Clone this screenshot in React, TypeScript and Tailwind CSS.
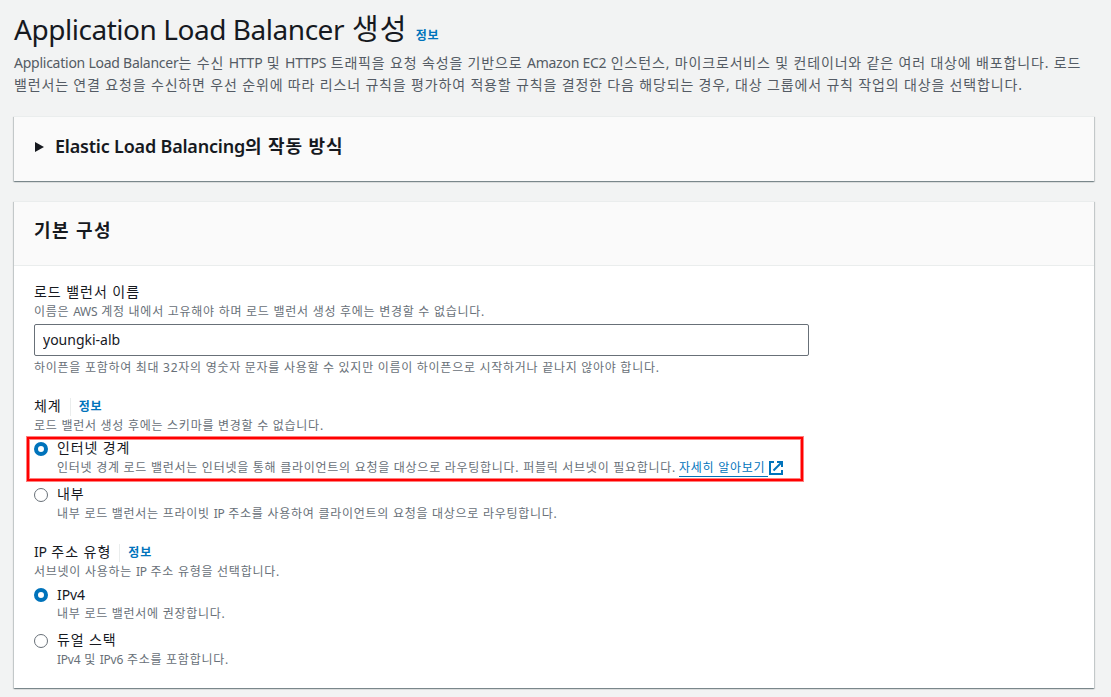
import { useState, type ReactNode } from "react";

function En({ children }: { children: ReactNode }) {
  return <span className="tracking-[-0.25px]">{children}</span>;
}

function InfoLink() {
  return (
    <a href="#" className="text-xs font-bold leading-[22px] tracking-[0.9px] text-[#0073bb]">
      정보
    </a>
  );
}

function ExternalIcon() {
  return (
    <svg viewBox="0 0 14 14" className="h-3.5 w-3.5 shrink-0" fill="none" stroke="#0073bb" strokeWidth="2">
      <path d="M5 1H1v12h12V9" />
      <path d="M8 1h5v5" />
      <path d="M13 1 4.5 9.5" />
    </svg>
  );
}

function Field({ label, info, hint, children }: { label: ReactNode; info?: boolean; hint: ReactNode; children: ReactNode }) {
  return (
    <div>
      <div className="flex h-[22px] items-center">
        <span className="pb-0.5 text-sm leading-5 tracking-[0.95px]">{label}</span>
        {info && (
          <span className="ml-2 flex h-[18px] items-center border-l border-[#eaeded] pl-2">
            <InfoLink />
          </span>
        )}
      </div>
      <p className="h-4 text-xs leading-4 tracking-[0.73px] text-[#687078]">{hint}</p>
      {children}
    </div>
  );
}

type RadioProps = {
  name: string;
  label: ReactNode;
  description: ReactNode;
  checked: boolean;
  onChange: () => void;
};

function Radio({ name, label, description, checked, onChange }: RadioProps) {
  return (
    <label className="flex h-[38px] gap-2">
      <input
        type="radio"
        name={name}
        checked={checked}
        onChange={onChange}
        className="mt-1 h-3.5 w-3.5 shrink-0 appearance-none rounded-full border border-[#687078] bg-white checked:border-4 checked:border-[#0073bb]"
      />
      <span>
        <span className="block h-[22px] pl-px text-sm leading-5 tracking-[0.85px]">{label}</span>
        <span className="flex h-4 items-center pl-px text-xs leading-4 tracking-[0.73px] text-[#687078]">
          {description}
        </span>
      </span>
    </label>
  );
}

const panel =
  "bg-white border-t border-[#eaeded] shadow-[0_1px_1px_0_rgba(0,28,36,0.3),1px_1px_1px_0_rgba(0,28,36,0.15),-1px_1px_1px_0_rgba(0,28,36,0.15)]";

export default function App() {
  const [name, setName] = useState("youngki-alb");
  const [scheme, setScheme] = useState("internet");
  const [ipType, setIpType] = useState("ipv4");

  return (
    <div className="h-[697px] overflow-hidden whitespace-nowrap bg-[#f2f3f3] px-3.5 pt-2.5 font-['Noto_Sans','Noto_Sans_CJK_KR',sans-serif] text-[#16191f]">
      <div className="flex h-9 items-baseline gap-2">
        <h1 className="text-[28px] leading-[37px] tracking-[-0.46px]">
          Application Load Balancer <span className="ml-px text-[29px] tracking-[1.2px]">생성</span>
        </h1>
        <InfoLink />
      </div>
      <p className="mt-1.5 text-sm leading-[22px] tracking-[0.84px] text-[#545b64]">
        <En>Application Load Balancer</En>는 수신 <En>HTTP</En> 및 <En>HTTPS</En> 트래픽을 요청 속성을 기반으로{" "}
        <En>Amazon EC2</En> 인스턴스, 마이크로서비스 및 컨테이너와 같은 여러 대상에 배포합니다. 로드
        <br />
        밸런서는 연결 요청을 수신하면 우선 순위에 따라 리스너 규칙을 평가하여 적용할 규칙을 결정한 다음 해당되는 경우, 대상 그룹에서 규칙 작업의 대상을 선택합니다.
      </p>

      <section className={`mt-5 w-[1080px] ${panel}`}>
        <button className="flex h-16 w-full items-center bg-[#fafafa] px-5 pb-1">
          <svg viewBox="0 0 9 10" className="ml-px h-2.5 w-[9px]" fill="#16191f">
            <path d="M0 0 9 5 0 10z" />
          </svg>
          <h2 className="ml-[11px] pb-0.5 text-lg font-semibold leading-[22px] tracking-[-0.2px]">
            Elastic Load Balancing<span className="tracking-[0.9px]">의 작동 방식</span>
          </h2>
        </button>
      </section>

      <section className={`mt-5 h-[487px] w-[1080px] ${panel}`}>
        <div className="flex h-16 items-center border-b border-[#eaeded] bg-[#fafafa] px-5 pb-2">
          <h2 className="text-lg font-semibold leading-[22px] tracking-[1.4px]">기본 구성</h2>
        </div>
        <div className="px-5 pt-4">
          <Field
            label="로드 밸런서 이름"
            hint={
              <>
                이름은 <En>AWS</En> 계정 내에서 고유해야 하며 로드 밸런서 생성 후에는 변경할 수 없습니다.
              </>
            }
          >
            <input
              value={name}
              onChange={(e) => setName(e.target.value)}
              className="mt-1 block h-8 w-[775px] rounded-[2px] border border-[#687078] bg-white px-2 pb-0.5 text-sm outline-none"
            />
            <p className="mt-1 text-xs leading-4 tracking-[0.72px] text-[#687078]">
              하이픈을 포함하여 최대 32자의 영숫자 문자를 사용할 수 있지만 이름이 하이픈으로 시작하거나 끝나지 않아야 합니다.
            </p>
          </Field>

          <div className="mt-5">
            <Field label="체계" info hint="로드 밸런서 생성 후에는 스키마를 변경할 수 없습니다.">
              <div className="relative mt-1 flex flex-col gap-2">
                <Radio
                  name="scheme"
                  label="인터넷 경계"
                  description={
                    <>
                      인터넷 경계 로드 밸런서는 인터넷을 통해 클라이언트의 요청을 대상으로 라우팅합니다. 퍼블릭 서브넷이 필요합니다.
                      <a href="#" className="ml-[3px] mr-px border-b border-[#0073bb] pr-[3px] text-[#0073bb]">
                        자세히 알아보기
                      </a>
                      <ExternalIcon />
                    </>
                  }
                  checked={scheme === "internet"}
                  onChange={() => setScheme("internet")}
                />
                <Radio
                  name="scheme"
                  label="내부"
                  description={
                    <span>
                      내부 로드 밸런서는 프라이빗 <En>IP</En> 주소를 사용하여 클라이언트의 요청을 대상으로 라우팅합니다.
                    </span>
                  }
                  checked={scheme === "internal"}
                  onChange={() => setScheme("internal")}
                />
                <div className="pointer-events-none absolute -left-[7px] -top-px h-11 w-[776px] border-2 border-[#ff0000] shadow-[0_0_0_1px_rgba(255,0,0,0.5),inset_0_0_0_1px_rgba(255,0,0,0.5)]" />
              </div>
            </Field>
          </div>

          <div className="mt-5">
            <Field
              label={
                <>
                  <En>IP</En> 주소 유형
                </>
              }
              info
              hint={
                <>
                  서브넷이 사용하는 <En>IP</En> 주소 유형을 선택합니다.
                </>
              }
            >
              <div className="mt-1 flex flex-col gap-2">
                <Radio
                  name="ip-type"
                  label={<span className="inline-block pt-px tracking-[-0.1px]">IPv4</span>}
                  description="내부 로드 밸런서에 권장합니다."
                  checked={ipType === "ipv4"}
                  onChange={() => setIpType("ipv4")}
                />
                <Radio
                  name="ip-type"
                  label="듀얼 스택"
                  description={
                    <span>
                      <En>IPv4</En> 및 <En>IPv6</En> 주소를 포함합니다.
                    </span>
                  }
                  checked={ipType === "dualstack"}
                  onChange={() => setIpType("dualstack")}
                />
              </div>
            </Field>
          </div>
        </div>
      </section>
    </div>
  );
}
